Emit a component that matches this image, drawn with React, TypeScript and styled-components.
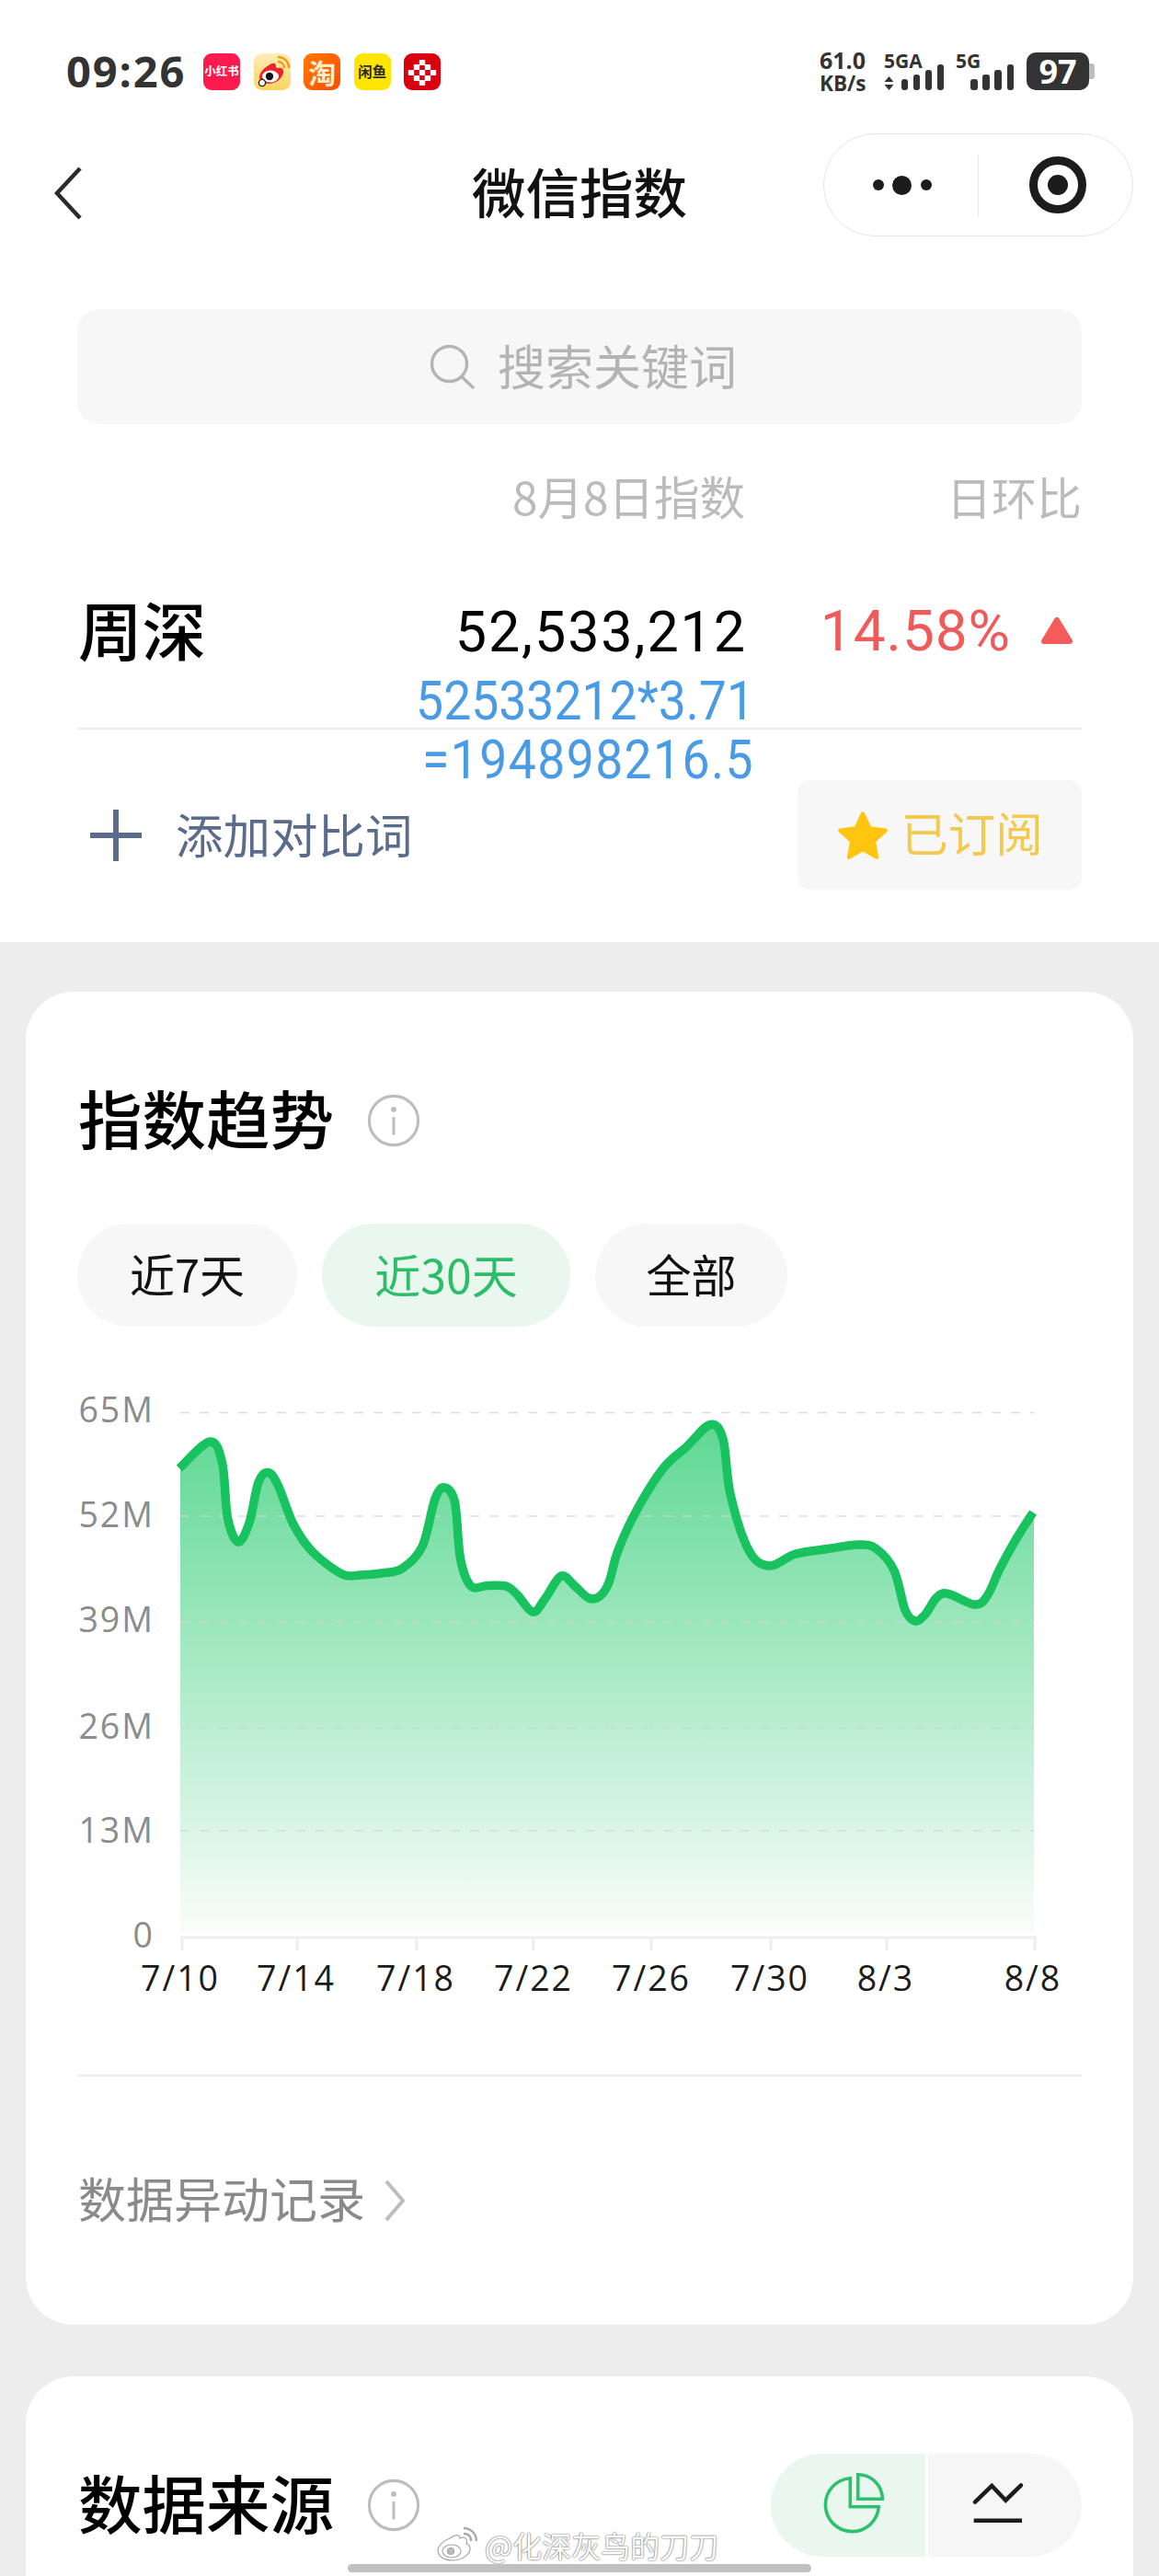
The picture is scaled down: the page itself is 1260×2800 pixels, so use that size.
import React from "react";
import styled, { createGlobalStyle } from "styled-components";

const CJK = `"Noto Sans CJK SC", "Noto Sans", sans-serif`;
const LATIN = `Roboto, "Noto Sans CJK SC", sans-serif`;
const ROUND = `"Open Sans", "Noto Sans CJK SC", sans-serif`;

const GlobalStyle = createGlobalStyle`
  html, body {
    margin: 0;
    padding: 0;
    background: #ededed;
  }
  * {
    box-sizing: border-box;
  }
`;

const Page = styled.div`
  position: relative;
  width: 1260px;
  height: 2800px;
  overflow: hidden;
  background: #ededed;
  font-family: ${CJK};
`;

const TopSection = styled.section`
  height: 1024px;
  background: #fff;
`;

/* status bar */
const StatusBar = styled.div`
  display: flex;
  align-items: flex-start;
  justify-content: space-between;
  padding: 57px 70px 0 72px;
  height: 98px;
`;

const StatusLeft = styled.div`
  display: flex;
  align-items: center;
`;

const Time = styled.span`
  width: 149px;
  font: 700 47px/41px ${ROUND};
  letter-spacing: 1.9px;
  color: #333;
`;

const Tiles = styled.div`
  display: flex;
  gap: 14.6px;
`;

const Tile = styled.div<{ $bg: string; $color?: string; $size?: number }>`
  display: flex;
  align-items: center;
  justify-content: center;
  width: 40px;
  height: 40px;
  border-radius: 9px;
  white-space: nowrap;
  background: ${({ $bg }) => $bg};
  color: ${({ $color }) => $color || "#fff"};
  font-size: ${({ $size }) => $size || 12}px;
  font-weight: 700;
  line-height: 1;
`;

const StatusRight = styled.div`
  display: flex;
  align-items: flex-start;
`;

const Speed = styled.div`
  width: 70px;
  margin-top: -4px;
  font-family: ${ROUND};
  font-weight: 700;
  color: #333;
`;

const SpeedLine = styled.div<{ $top?: boolean }>`
  font-size: ${({ $top }) => ($top ? 25 : 22.5)}px;
  line-height: 25px;
`;

const Signal = styled.div<{ $width: number }>`
  display: grid;
  width: ${({ $width }) => $width}px;
  height: 41px;
  margin-right: 14px;
`;

const SignalLabel = styled.span`
  grid-area: 1 / 1;
  justify-self: start;
  align-self: start;
  font: 700 21px/19px ${ROUND};
  color: #333;
`;

const SignalBars = styled.div`
  grid-area: 1 / 1;
  justify-self: stretch;
  align-self: end;
  display: flex;
  justify-content: flex-end;
  align-items: flex-end;
  gap: 5.6px;
`;

const Bar = styled.span<{ $h: number }>`
  width: 7.5px;
  height: ${({ $h }) => $h}px;
  border-radius: 3px;
  background: #333;
`;

const UpDown = styled.svg`
  margin-right: 2px;
  align-self: flex-end;
`;

const Battery = styled.div`
  display: flex;
  align-items: center;
`;

const BatteryBody = styled.div`
  display: flex;
  align-items: center;
  justify-content: center;
  width: 68px;
  height: 41px;
  border-radius: 10px;
  background: #333;
  color: #fff;
  font: 700 36px/41px ${ROUND};
`;

const BatteryNub = styled.span`
  width: 6px;
  height: 17px;
  border-radius: 0 3px 3px 0;
  background: #bdbdbd;
`;

/* navigation */
const NavBar = styled.div`
  display: grid;
  grid-template-columns: 1fr auto 1fr;
  align-items: center;
  height: 112px;
  margin-top: 47px;
  padding: 0 28px;
`;

const BackIcon = styled.svg`
  margin: 18px 0 0 30px;
`;

const Title = styled.h1`
  margin: 12px 0 0;
  font-size: 58.5px;
  line-height: 70px;
  font-weight: 500;
  color: #111;
`;

const Capsule = styled.div`
  justify-self: end;
  display: flex;
  align-items: center;
  width: 337px;
  height: 112px;
  border: 1.5px solid #e6e6e6;
  border-radius: 56px;
`;

const MoreButton = styled.div`
  display: flex;
  align-items: center;
  justify-content: center;
  gap: 9.5px;
  width: 168px;
  height: 67px;
  padding-left: 2px;
  border-right: 1.5px solid #e4e4e4;
`;

const Dot = styled.span<{ $big?: boolean }>`
  width: ${({ $big }) => ($big ? 21 : 12)}px;
  height: ${({ $big }) => ($big ? 21 : 12)}px;
  border-radius: 50%;
  background: #1c1c1c;
`;

const TargetButton = styled.div`
  flex: 1;
  display: flex;
  align-items: center;
  justify-content: center;
  padding-left: 4px;
`;

/* search */
const SearchBox = styled.div`
  display: flex;
  align-items: center;
  justify-content: center;
  gap: 25px;
  height: 125px;
  margin: 79px 84px 0;
  padding-left: 9px;
  border-radius: 24px;
  background: #f7f7f7;
  color: #b4b4b4;
  font-size: 52px;
`;

const RaisedLabel = styled.span<{ $lift: number }>`
  padding-bottom: ${({ $lift }) => $lift}px;
`;

/* keyword table */
const TableGrid = styled.div`
  display: grid;
  grid-template-columns: 1fr auto 366px;
  align-items: center;
`;

const ColumnHeader = styled(TableGrid)`
  margin: 48px 84px 0;
  height: 60px;
  color: #bbb;
  font-size: 49.5px;
  line-height: 60px;
`;

const RatioHead = styled.span`
  justify-self: end;
  font-size: 49px;
`;

const KeywordBlock = styled.div`
  position: relative;
  margin: 77px 84px 0;
`;

const KeywordRow = styled(TableGrid)`
  grid-template-rows: 80px;
  height: 80px;
`;

const KeywordName = styled.span`
  margin-left: 1px;
  padding-bottom: 7px;
  font-size: 69.5px;
  line-height: 80px;
  font-weight: 500;
  color: #000;
`;

const IndexValue = styled.span`
  margin-right: -2px;
  padding-top: 2px;
  font: 400 61px/80px ${LATIN};
  letter-spacing: 1.9px;
  color: #000;
`;

const Change = styled.div`
  display: flex;
  align-items: center;
  justify-content: flex-end;
  gap: 32px;
  padding-right: 9px;
`;

const ChangeValue = styled.span`
  font: 400 62px/80px ${LATIN};
  letter-spacing: 1px;
  color: #ef5a5a;
`;

const Annotation = styled.div`
  position: absolute;
  right: 356px;
  top: 84px;
  text-align: right;
  color: #4a9be6;
  font: 400 53.5px/64px ${LATIN};
  white-space: nowrap;
`;

const AnnotationLine = styled.div<{ $spread?: boolean }>`
  transform: scaleY(1.12);
  letter-spacing: ${({ $spread }) => ($spread ? 1.4 : 0)}px;
`;

const Rule = styled.div`
  height: 2px;
  margin: 65px 84px 0;
  background: #eeeeee;
`;

const AddRow = styled.div`
  display: flex;
  align-items: center;
  justify-content: space-between;
  margin: 55px 84px 0;
  height: 119px;
`;

const AddLink = styled.div`
  display: flex;
  align-items: center;
  gap: 37px;
  padding-left: 14px;
  color: #5b6b8c;
  font-size: 51.5px;
`;

const SubscribeButton = styled.div`
  display: flex;
  align-items: center;
  justify-content: center;
  gap: 12px;
  width: 309px;
  height: 119px;
  border-radius: 14px;
  background: #f7f7f7;
  color: #f4c94f;
  font-size: 51.5px;
`;

/* cards */
const Card = styled.section<{ $last?: boolean }>`
  margin: ${({ $last }) => ($last ? "56px" : "54px")} 28px 0;
  padding: ${({ $last }) => ($last ? "0 56px" : "0 56px 100px")};
  border-radius: 52px;
  background: #fff;
  height: ${({ $last }) => ($last ? "600px" : "auto")};
`;

const CardHead = styled.div`
  display: flex;
  align-items: center;
  gap: 36px;
  height: 175px;
  padding: 105px 0 0 1px;
`;

const CardTitle = styled.h2`
  margin: 0;
  padding-bottom: 8px;
  font-size: 69.5px;
  line-height: 70px;
  font-weight: 500;
  color: #000;
`;

const Chips = styled.div`
  display: flex;
  gap: 27px;
  margin-top: 77px;
`;

const Chip = styled.div<{ $active?: boolean; $width: number }>`
  display: flex;
  align-items: center;
  justify-content: center;
  width: ${({ $width }) => $width}px;
  height: 112px;
  padding-bottom: 5px;
  border-radius: 56px;
  background: ${({ $active }) => ($active ? "#e9f7ee" : "#f7f7f7")};
  color: ${({ $active }) => ($active ? "#2bbd68" : "#111")};
  font-size: ${({ $active }) => ($active ? 50 : 49)}px;
`;

const ChartSvg = styled.svg`
  display: block;
  margin-top: 60px;
`;

const AxisText = styled.text<{ $dark?: boolean }>`
  font: 400 37.5px ${ROUND};
  letter-spacing: 2px;
  fill: ${({ $dark }) => ($dark ? "#1c1c1c" : "#8c8c8c")};
`;

const CardRule = styled.div`
  height: 1.5px;
  margin-top: 63px;
  background: #eeeeee;
`;

const RecordLink = styled.div`
  display: flex;
  align-items: center;
  gap: 20px;
  height: 70px;
  margin: 100px 0 0 1px;
  color: #8a8a8a;
  font-size: 52px;
`;

const SourceHead = styled.div`
  display: flex;
  align-items: center;
  justify-content: space-between;
  padding-top: 84px;
`;

const SourceTitle = styled.div`
  display: flex;
  align-items: center;
  gap: 36px;
  height: 112px;
  padding-left: 1px;
`;

const Toggle = styled.div`
  display: flex;
  gap: 3px;
`;

const ToggleSide = styled.div<{ $active?: boolean }>`
  display: flex;
  align-items: center;
  justify-content: center;
  width: 167.5px;
  height: 112px;
  border-radius: ${({ $active }) => ($active ? "56px 0 0 56px" : "0 56px 56px 0")};
  background: ${({ $active }) => ($active ? "#e9f7ee" : "#f6f6f6")};
`;

const PieIcon = styled.svg`
  margin: -8px 0 0 10px;
`;

const TrendIcon = styled.svg`
  margin: -2px 14px 0 0;
`;

/* overlays at the bottom of the screen */
const Watermark = styled.div`
  position: absolute;
  left: 475px;
  top: 2746px;
  display: flex;
  align-items: center;
  gap: 8px;
  color: #fff;
  font-size: 32px;
  line-height: 40px;
  white-space: nowrap;
  text-shadow: 0 0 2px rgba(0, 0, 0, 0.6), 0 0 1px rgba(0, 0, 0, 0.5);
`;

const HomeBar = styled.div`
  position: absolute;
  left: 378px;
  top: 2787px;
  width: 504px;
  height: 9px;
  border-radius: 5px;
  background: #c0c0c0;
`;

/* chart data, in page pixels */
const LINE: [number, number][] = [
  [195, 1596], [228, 1567], [241.6, 1590], [247.5, 1650], [259, 1676], [271, 1655], [281, 1611],
  [292, 1600.6], [303, 1616], [319, 1657], [340, 1687], [372, 1711], [392, 1712], [415, 1710], [437, 1705],
  [459, 1681], [473, 1629], [483.5, 1617], [494.5, 1633], [500.5, 1694], [512, 1724], [530, 1723.5], [550, 1724],
  [562, 1733], [579.5, 1752], [593, 1737], [610, 1713], [625, 1724], [640, 1737], [652, 1735],
  [662, 1720], [672, 1685], [693, 1640], [721, 1596], [747, 1572], [772, 1548.5], [786, 1564],
  [794, 1624], [814, 1685], [836, 1702], [865, 1689], [900, 1683.5], [932.5, 1679], [952, 1683], [972, 1707],
  [984, 1750], [995, 1762], [1005.6, 1755], [1025, 1732], [1059, 1744], [1073, 1735], [1087, 1705],
  [1104, 1674], [1123, 1644],
];

const GRID_Y = [1535.5, 1648, 1763, 1878.5, 1990];
const Y_LABELS: [string, number][] = [
  ["65M", 1546], ["52M", 1660], ["39M", 1774], ["26M", 1890], ["13M", 2003], ["0", 2117],
];
const X_TICKS = [198, 323, 453, 579.5, 708, 838, 964, 1125];
const X_LABELS: [string, number][] = [
  ["7/10", 196], ["7/14", 322], ["7/18", 452], ["7/22", 580],
  ["7/26", 708], ["7/30", 837], ["8/3", 963], ["8/8", 1123],
];

const smoothPath = (pts: [number, number][]) => {
  let d = `M${pts[0][0]} ${pts[0][1]}`;
  for (let i = 0; i < pts.length - 1; i++) {
    const p0 = pts[Math.max(i - 1, 0)];
    const p1 = pts[i];
    const p2 = pts[i + 1];
    const p3 = pts[Math.min(i + 2, pts.length - 1)];
    const c1x = p1[0] + (p2[0] - p0[0]) / 6;
    const c1y = p1[1] + (p2[1] - p0[1]) / 6;
    const c2x = p2[0] - (p3[0] - p1[0]) / 6;
    const c2y = p2[1] - (p3[1] - p1[1]) / 6;
    d += `C${c1x.toFixed(1)} ${c1y.toFixed(1)} ${c2x.toFixed(1)} ${c2y.toFixed(1)} ${p2[0]} ${p2[1]}`;
  }
  return d;
};

const InfoIcon = () => (
  <svg width="58" height="58" viewBox="0 0 60 60">
    <circle cx="30" cy="30" r="27.5" fill="none" stroke="#bdbdbd" strokeWidth="3.2" />
    <circle cx="30" cy="17.5" r="3" fill="#bdbdbd" />
    <path d="M30 26v20" stroke="#bdbdbd" strokeWidth="3.2" />
  </svg>
);

const Chart = () => {
  const line = smoothPath(LINE);
  const area = `${line}L1124 1644L1124 2100L196 2100L196 1596Z`;
  return (
    <ChartSvg width="1092" height="690" viewBox="84 1502 1092 690">
      <defs>
        <linearGradient id="areaFill" gradientUnits="userSpaceOnUse" x1="0" y1="1548" x2="0" y2="2100">
          <stop offset="0" stopColor="#5ed893" />
          <stop offset="1" stopColor="#fafdfb" />
        </linearGradient>
      </defs>
      <path d={area} fill="url(#areaFill)" />
      {GRID_Y.map((y) => (
        <path
          key={y}
          d={`M196 ${y}H1124`}
          stroke="#d4d4d4"
          strokeWidth="1.5"
          strokeDasharray="10 11"
          opacity="0.75"
        />
      ))}
      <path d={line} fill="none" stroke="#17c25f" strokeWidth="9.5" strokeLinejoin="round" />
      <path d="M196 2106H1127" stroke="#eeeeee" strokeWidth="3" />
      {X_TICKS.map((x) => (
        <path key={x} d={`M${x} 2106V2120`} stroke="#eeeeee" strokeWidth="3" />
      ))}
      {Y_LABELS.map(([label, y]) => (
        <AxisText key={label} x="168" y={y} textAnchor="end">
          {label}
        </AxisText>
      ))}
      {X_LABELS.map(([label, x]) => (
        <AxisText key={label} $dark x={x} y="2164" textAnchor="middle">
          {label}
        </AxisText>
      ))}
    </ChartSvg>
  );
};

const WeiboGlyph = () => (
  <svg width="40" height="40" viewBox="0 0 40 40">
    <path
      d="M16 13c4-3 8-3 8 1 0 1 0 2 1 2 5-1 8 1 7 5-1 7-9 12-16 12-5 0-10-3-10-7 0-5 5-10 10-13z"
      fill="#e8262c"
    />
    <ellipse cx="18" cy="25" rx="9" ry="6.5" fill="#fff" />
    <circle cx="17" cy="25" r="4.2" fill="#111" />
    <circle cx="9" cy="32" r="3.6" fill="#fff" stroke="#222" strokeWidth="1.4" />
    <path d="M26 9c4 0 7 3 7 7M26 4c7 0 12 5 12 12" fill="none" stroke="#f29a1d" strokeWidth="2.4" />
  </svg>
);

const CheckerGlyph = () => (
  <svg width="40" height="40" viewBox="0 0 40 40">
    {[
      [20, 10], [14, 15], [26, 15], [8, 21], [20, 21], [32, 21], [14, 27], [26, 27], [20, 32],
    ].map(([x, y]) => (
      <rect key={`${x}-${y}`} x={x - 3.2} y={y - 3} width="6.4" height="6" rx="0.8" fill="#fff" />
    ))}
  </svg>
);

const App = () => (
  <Page>
    <GlobalStyle />
    <TopSection>
      <StatusBar>
        <StatusLeft>
          <Time>09:26</Time>
          <Tiles>
            <Tile $bg="#fc1a4e" $size={12.5}>
              小红书
            </Tile>
            <Tile $bg="linear-gradient(#ffedb8, #ffd45f)">
              <WeiboGlyph />
            </Tile>
            <Tile $bg="linear-gradient(135deg, #ff7a00, #ff4d00)" $size={30} $color="#ffeccb">
              淘
            </Tile>
            <Tile $bg="#ffe600" $color="#2a2a2a" $size={15.5}>
              闲鱼
            </Tile>
            <Tile $bg="#d90010">
              <CheckerGlyph />
            </Tile>
          </Tiles>
        </StatusLeft>
        <StatusRight>
          <Speed>
            <SpeedLine $top>61.0</SpeedLine>
            <SpeedLine>KB/s</SpeedLine>
          </Speed>
          <Signal $width={64}>
            <SignalLabel>5GA</SignalLabel>
            <SignalBars>
              <UpDown width="11" height="15" viewBox="0 0 11 15">
                <path d="M5.5 0L10.5 6H.5zM5.5 15L.5 9H10.5z" fill="#333" />
              </UpDown>
              <Bar $h={12} />
              <Bar $h={17} />
              <Bar $h={22} />
              <Bar $h={28} />
            </SignalBars>
          </Signal>
          <Signal $width={63}>
            <SignalLabel>5G</SignalLabel>
            <SignalBars>
              <Bar $h={12} />
              <Bar $h={17} />
              <Bar $h={22} />
              <Bar $h={28} />
            </SignalBars>
          </Signal>
          <Battery>
            <BatteryBody>97</BatteryBody>
            <BatteryNub />
          </Battery>
        </StatusRight>
      </StatusBar>

      <NavBar>
        <BackIcon width="32" height="58" viewBox="0 0 32 58">
          <path d="M29 2L4 29l25 27" fill="none" stroke="#2b2b2b" strokeWidth="4.5" />
        </BackIcon>
        <Title>微信指数</Title>
        <Capsule>
          <MoreButton>
            <Dot />
            <Dot $big />
            <Dot />
          </MoreButton>
          <TargetButton>
            <svg width="62" height="62" viewBox="0 0 62 62">
              <circle cx="31" cy="31" r="26.5" fill="none" stroke="#1c1c1c" strokeWidth="9" />
              <circle cx="31" cy="31" r="11" fill="#1c1c1c" />
            </svg>
          </TargetButton>
        </Capsule>
      </NavBar>

      <SearchBox>
        <svg width="48" height="48" viewBox="0 0 48 48">
          <circle cx="20.5" cy="20.5" r="19" fill="none" stroke="#b4b4b4" strokeWidth="3.4" />
          <path d="M33.5 34L47 47" stroke="#b4b4b4" strokeWidth="3.4" />
        </svg>
        <RaisedLabel $lift={4}>搜索关键词</RaisedLabel>
      </SearchBox>

      <ColumnHeader>
        <span />
        <span>8月8日指数</span>
        <RatioHead>日环比</RatioHead>
      </ColumnHeader>

      <KeywordBlock>
        <KeywordRow>
          <KeywordName>周深</KeywordName>
          <IndexValue>52,533,212</IndexValue>
          <Change>
            <ChangeValue>14.58%</ChangeValue>
            <svg width="36" height="32" viewBox="0 0 36 32">
              <path d="M18 4L32 27H4z" fill="#f45b5b" stroke="#f45b5b" strokeWidth="6" strokeLinejoin="round" />
            </svg>
          </Change>
        </KeywordRow>
        <Annotation>
          <AnnotationLine>52533212*3.71</AnnotationLine>
          <AnnotationLine $spread>=194898216.5</AnnotationLine>
        </Annotation>
      </KeywordBlock>
      <Rule />

      <AddRow>
        <AddLink>
          <svg width="56" height="56" viewBox="0 0 56 56">
            <path d="M28 0v56M0 28h56" stroke="#5b6b8c" strokeWidth="6" />
          </svg>
          <RaisedLabel $lift={5}>添加对比词</RaisedLabel>
        </AddLink>
        <SubscribeButton>
          <svg width="58" height="56" viewBox="0 0 54 52">
            <path
              d="M27 4l7 15 16 2-12 11 3 16-14-8-14 8 3-16L4 21l16-2z"
              fill="#ffc510"
              stroke="#ffc510"
              strokeWidth="4"
              strokeLinejoin="round"
            />
          </svg>
          <RaisedLabel $lift={9}>已订阅</RaisedLabel>
        </SubscribeButton>
      </AddRow>
    </TopSection>

    <Card>
      <CardHead>
        <CardTitle>指数趋势</CardTitle>
        <InfoIcon />
      </CardHead>
      <Chips>
        <Chip $width={239}>近7天</Chip>
        <Chip $width={270} $active>
          近30天
        </Chip>
        <Chip $width={209}>全部</Chip>
      </Chips>
      <Chart />
      <CardRule />
      <RecordLink>
        <RaisedLabel $lift={7}>数据异动记录</RaisedLabel>
        <svg width="24" height="48" viewBox="0 0 24 48">
          <path d="M3 3l18 21L3 45" fill="none" stroke="#bdbdbd" strokeWidth="4" />
        </svg>
      </RecordLink>
    </Card>

    <Card $last>
      <SourceHead>
        <SourceTitle>
          <CardTitle>数据来源</CardTitle>
          <InfoIcon />
        </SourceTitle>
        <Toggle>
          <ToggleSide $active>
            <PieIcon width="72" height="72" viewBox="0 0 72 72">
              <g fill="none" stroke="#2fc06f" strokeWidth="3.6">
                <path d="M33.3 10.7A29 29 0 1 0 64.3 41.7H33.3Z" />
                <path d="M41.7 6.7A26.6 26.6 0 0 1 68.3 33.3H41.7Z" />
              </g>
            </PieIcon>
          </ToggleSide>
          <ToggleSide>
            <TrendIcon width="60" height="50" viewBox="0 0 60 50">
              <path d="M5 22.7L23.3 5l15 15.7L55 4.3" fill="none" stroke="#1c1c1c" strokeWidth="4.5" strokeLinecap="round" />
              <path d="M3.7 42.7H56" stroke="#1c1c1c" strokeWidth="4.5" />
            </TrendIcon>
          </ToggleSide>
        </Toggle>
      </SourceHead>
    </Card>

    <Watermark>
      <svg width="44" height="40" viewBox="0 0 44 40">
        <g fill="#fff" stroke="#a8a8a8" strokeWidth="1.2">
          <path d="M14 13c5-4 11-5 11 0 5-2 9 0 7 6 3 1 4 3 4 5 0 7-9 13-19 13C8 37 1 33 1 26c0-4 5-10 13-13z" />
          <ellipse cx="16" cy="27" rx="10" ry="7" />
          <circle cx="15" cy="27" r="3.5" fill="#bbb" />
          <path d="M29 8c5 0 8 3 8 8M29 2c8 0 14 6 14 14" fill="none" strokeWidth="2.4" />
        </g>
      </svg>
      @化深灰鸟的刀刀
    </Watermark>
    <HomeBar />
  </Page>
);

export default App;
